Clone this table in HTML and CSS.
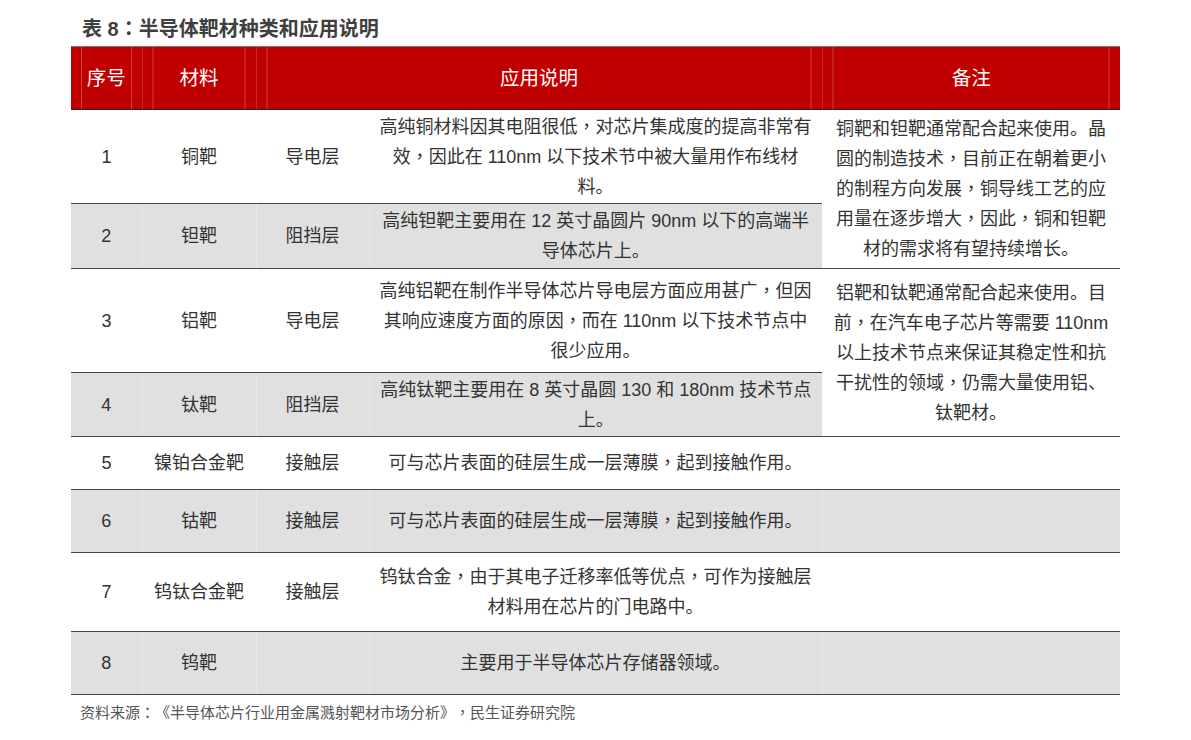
FILE: index.html
```html
<!DOCTYPE html>
<html lang="zh-CN">
<head>
<meta charset="utf-8">
<title>表 8：半导体靶材种类和应用说明</title>
<link rel="stylesheet" href="styles.css">
</head>
<body>
<div class="page">
  <h1 class="title">表 8<span class="pc" lang="zh-Hant">：</span>半导体靶材种类和应用说明</h1>
  <table class="tbl">
    <colgroup>
      <col class="c1"><col class="c2"><col class="c3"><col class="c4"><col class="c5">
    </colgroup>
    <thead>
      <tr class="head">
        <th>序号</th>
        <th>材料</th>
        <th colspan="2">应用说明</th>
        <th>备注</th>
      </tr>
    </thead>
    <tbody>
      <tr class="r1">
        <td>1</td><td>铜靶</td><td>导电层</td>
        <td>高纯铜材料因其电阻很低<span class="pc" lang="zh-Hant">，</span>对芯片集成度的提高非常有<br>效<span class="pc" lang="zh-Hant">，</span>因此在 110nm 以下技术节中被大量用作布线材<br>料。</td>
        <td rowspan="2" class="note">铜靶和钽靶通常配合起来使用。晶<br>圆的制造技术<span class="pc" lang="zh-Hant">，</span>目前正在朝着更小<br>的制程方向发展<span class="pc" lang="zh-Hant">，</span>铜导线工艺的应<br>用量在逐步增大<span class="pc" lang="zh-Hant">，</span>因此<span class="pc" lang="zh-Hant">，</span>铜和钽靶<br>材的需求将有望持续增长。</td>
      </tr>
      <tr class="r2 g">
        <td>2</td><td>钽靶</td><td>阻挡层</td>
        <td>高纯钽靶主要用在 12 英寸晶圆片 90nm 以下的高端半<br>导体芯片上。</td>
      </tr>
      <tr class="r3">
        <td>3</td><td>铝靶</td><td>导电层</td>
        <td>高纯铝靶在制作半导体芯片导电层方面应用甚广<span class="pc" lang="zh-Hant">，</span>但因<br>其响应速度方面的原因<span class="pc" lang="zh-Hant">，</span>而在 110nm 以下技术节点中<br>很少应用。</td>
        <td rowspan="2" class="note">铝靶和钛靶通常配合起来使用。目<br>前<span class="pc" lang="zh-Hant">，</span>在汽车电子芯片等需要 110nm<br>以上技术节点来保证其稳定性和抗<br>干扰性的领域<span class="pc" lang="zh-Hant">，</span>仍需大量使用铝、<br>钛靶材。</td>
      </tr>
      <tr class="r4 g">
        <td>4</td><td>钛靶</td><td>阻挡层</td>
        <td>高纯钛靶主要用在 8 英寸晶圆 130 和 180nm 技术节点<br>上。</td>
      </tr>
      <tr class="r5">
        <td>5</td><td>镍铂合金靶</td><td>接触层</td>
        <td>可与芯片表面的硅层生成一层薄膜<span class="pc" lang="zh-Hant">，</span>起到接触作用。</td>
        <td></td>
      </tr>
      <tr class="r6 g">
        <td>6</td><td>钴靶</td><td>接触层</td>
        <td>可与芯片表面的硅层生成一层薄膜<span class="pc" lang="zh-Hant">，</span>起到接触作用。</td>
        <td></td>
      </tr>
      <tr class="r7">
        <td>7</td><td>钨钛合金靶</td><td>接触层</td>
        <td>钨钛合金<span class="pc" lang="zh-Hant">，</span>由于其电子迁移率低等优点<span class="pc" lang="zh-Hant">，</span>可作为接触层<br>材料用在芯片的门电路中。</td>
        <td></td>
      </tr>
      <tr class="r8 g">
        <td>8</td><td>钨靶</td><td></td>
        <td>主要用于半导体芯片存储器领域。</td>
        <td></td>
      </tr>
    </tbody>
  </table>
  <p class="source">资料来源<span class="pc" lang="zh-Hant">：</span>《半导体芯片行业用金属溅射靶材市场分析》<span class="pc" lang="zh-Hant">，</span>民生证券研究院</p>
</div>
</body>
</html>
```

FILE: styles.css
```css
html, body {
  margin: 0;
  padding: 0;
  background: #ffffff;
}

body {
  font-family: "Liberation Sans", "Noto Sans CJK SC", sans-serif;
  color: #333333;
  text-spacing-trim: space-all;
}

.pc {
  font-family: "Noto Sans CJK TC", "Noto Sans CJK SC", sans-serif;
  line-height: 0;
}

.page {
  padding: 16px 0 0 71px;
  width: 1049px;
}

.title {
  margin: 0 0 4px 0;
  padding-left: 11px;
  font-size: 20px;
  line-height: 26px;
  height: 26px;
  font-weight: 700;
  color: #3f3f3f;
}

.tbl {
  width: 1049px;
  table-layout: fixed;
  border-collapse: collapse;
  border-spacing: 0;
}

.c1 { width: 71px; }
.c2 { width: 114px; }
.c3 { width: 113px; }
.c4 { width: 453px; }
.c5 { width: 298px; }

.head {
  height: 63px;
}

.head th {
  background-color: #c00000;
  background-image:
    linear-gradient(to right, transparent 10px, #d23c3c 10px, #d23c3c 11px, transparent 11px),
    linear-gradient(to left, transparent 10px, #d23c3c 10px, #d23c3c 11px, transparent 11px);
  color: #ffffff;
  font-weight: 400;
  font-size: 19.5px;
  line-height: 26px;
  padding: 0;
  text-align: center;
  vertical-align: middle;
  border-top: 1px solid #777777;
  border-bottom: 1px solid #222222;
  border-left: 1px solid #cc2a2a;
}

.head th:first-child {
  border-left: none;
}

.tbl td {
  font-size: 18px;
  line-height: 30px;
  padding: 0 4px;
  text-align: center;
  vertical-align: middle;
  border-bottom: 1px solid #444444;
  white-space: nowrap;
}

.g td {
  background-color: #e0e0e0;
  border-top: 1px solid #7a7a7a;
  border-left: 1px solid #e9e9e9;
}

.g td:first-child {
  border-left: none;
}

.tbl td.note {
  background-color: #ffffff;
}

.r1 { height: 94px; }
.r2 { height: 65px; }
.r3 { height: 104px; }
.r4 { height: 64px; }
.r5 { height: 53px; }
.r6 { height: 63px; }
.r7 { height: 79px; }
.r8 { height: 63px; }

.source {
  margin: 7px 0 0 0;
  padding-left: 9px;
  font-size: 15px;
  line-height: 22px;
  color: #555555;
}
```
